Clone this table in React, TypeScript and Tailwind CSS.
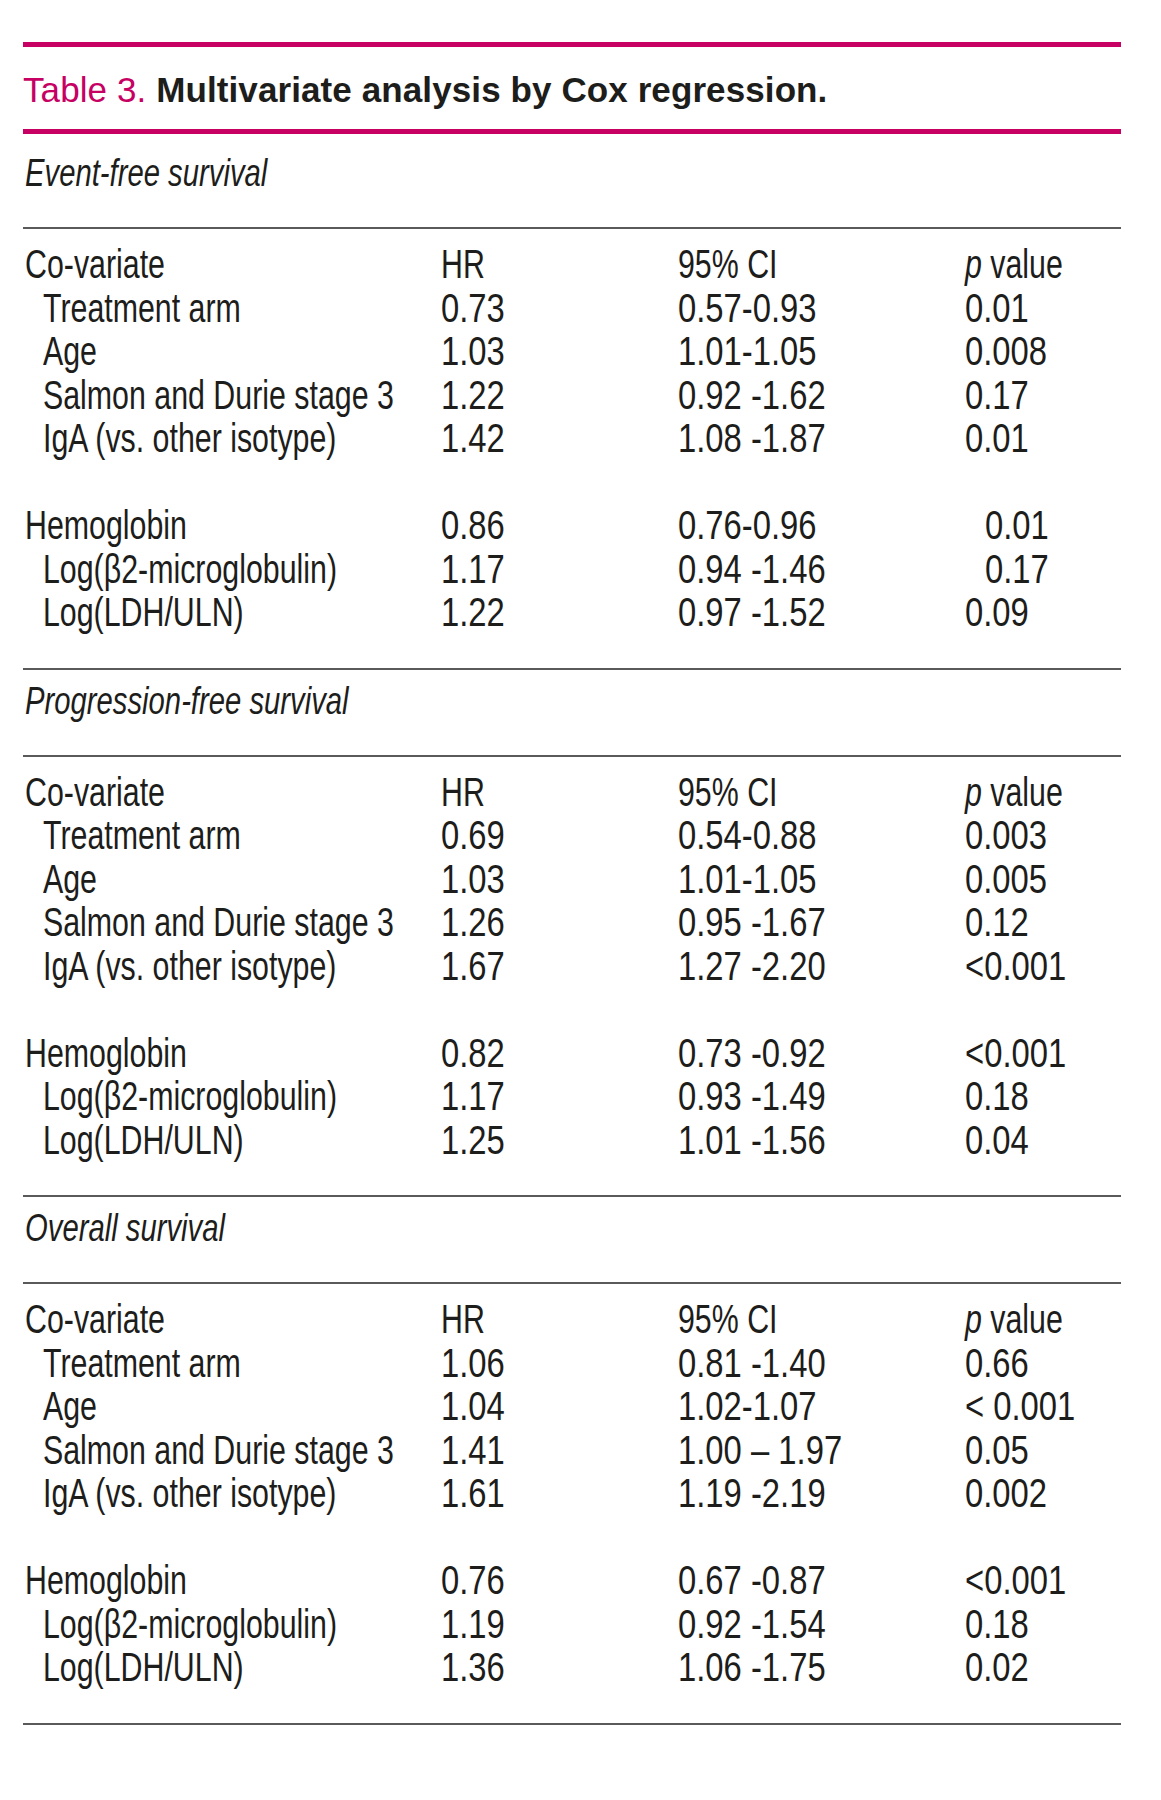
type Row = {
  label: string;
  hr: string;
  ci: string;
  p: string;
  indent?: boolean;
  pIndent?: boolean;
} | null;

type Section = { title: string; rows: Row[] };

const header: Row = { label: "Co-variate", hr: "HR", ci: "95% CI", p: "value" };

const sections: Section[] = [
  {
    title: "Event-free survival",
    rows: [
      header,
      { label: "Treatment arm", hr: "0.73", ci: "0.57-0.93", p: "0.01", indent: true },
      { label: "Age", hr: "1.03", ci: "1.01-1.05", p: "0.008", indent: true },
      { label: "Salmon and Durie stage 3", hr: "1.22", ci: "0.92 -1.62", p: "0.17", indent: true },
      { label: "IgA (vs. other isotype)", hr: "1.42", ci: "1.08 -1.87", p: "0.01", indent: true },
      null,
      { label: "Hemoglobin", hr: "0.86", ci: "0.76-0.96", p: "0.01", pIndent: true },
      { label: "Log(β2-microglobulin)", hr: "1.17", ci: "0.94 -1.46", p: "0.17", indent: true, pIndent: true },
      { label: "Log(LDH/ULN)", hr: "1.22", ci: "0.97 -1.52", p: "0.09", indent: true },
    ],
  },
  {
    title: "Progression-free survival",
    rows: [
      header,
      { label: "Treatment arm", hr: "0.69", ci: "0.54-0.88", p: "0.003", indent: true },
      { label: "Age", hr: "1.03", ci: "1.01-1.05", p: "0.005", indent: true },
      { label: "Salmon and Durie stage 3", hr: "1.26", ci: "0.95 -1.67", p: "0.12", indent: true },
      { label: "IgA (vs. other isotype)", hr: "1.67", ci: "1.27 -2.20", p: "<0.001", indent: true },
      null,
      { label: "Hemoglobin", hr: "0.82", ci: "0.73 -0.92", p: "<0.001" },
      { label: "Log(β2-microglobulin)", hr: "1.17", ci: "0.93 -1.49", p: "0.18", indent: true },
      { label: "Log(LDH/ULN)", hr: "1.25", ci: "1.01 -1.56", p: "0.04", indent: true },
    ],
  },
  {
    title: "Overall survival",
    rows: [
      header,
      { label: "Treatment arm", hr: "1.06", ci: "0.81 -1.40", p: "0.66", indent: true },
      { label: "Age", hr: "1.04", ci: "1.02-1.07", p: "< 0.001", indent: true },
      { label: "Salmon and Durie stage 3", hr: "1.41", ci: "1.00 – 1.97", p: "0.05", indent: true },
      { label: "IgA (vs. other isotype)", hr: "1.61", ci: "1.19 -2.19", p: "0.002", indent: true },
      null,
      { label: "Hemoglobin", hr: "0.76", ci: "0.67 -0.87", p: "<0.001" },
      { label: "Log(β2-microglobulin)", hr: "1.19", ci: "0.92 -1.54", p: "0.18", indent: true },
      { label: "Log(LDH/ULN)", hr: "1.36", ci: "1.06 -1.75", p: "0.02", indent: true },
    ],
  },
];

const Rule = () => <div className="h-[2px] bg-[#5a5a5a]" />;

// the print table uses a condensed face; squeeze Liberation Sans to match.
// letters run narrower than figures in that face, hence two widths
const Cond = ({ children, num }: { children: React.ReactNode; num?: boolean }) => (
  <span
    className={`inline-block origin-left whitespace-nowrap ${num ? "scale-x-[0.8]" : "scale-x-[0.74]"}`}
  >
    {children}
  </span>
);

function DataRow({ row, isHeader }: { row: Row; isHeader: boolean }) {
  if (!row) return <div className="h-[43.5px]" />;
  const num = !isHeader;
  return (
    <div className="grid h-[43.5px] grid-cols-[416px_237px_287px_1fr] items-center pl-[2px] leading-[43.5px]">
      <div className={row.indent ? "pl-[18px]" : ""}>
        <Cond>{row.label}</Cond>
      </div>
      <div>
        <Cond num={num}>{row.hr}</Cond>
      </div>
      <div>
        <Cond num={num}>{row.ci}</Cond>
      </div>
      <div className={row.pIndent ? "pl-[20px]" : ""}>
        <Cond num={num}>
          {isHeader && <i>p </i>}
          {row.p}
        </Cond>
      </div>
    </div>
  );
}

export default function App() {
  return (
    <div className="min-h-[1800px] bg-white pl-[23px] pt-[42px] text-[#1d1d1b]">
      <div className="w-[1098px]">
        <div className="h-[5px] bg-[#c70063]" />
        <div className="pb-[19px] pt-[23px] font-['Liberation_Sans',Arial,sans-serif] text-[35px] leading-[40px] tracking-[0.1px]">
          <span className="text-[#c70063]">Table 3.</span>{" "}
          <span className="font-bold">Multivariate analysis by Cox regression.</span>
        </div>
        <div className="h-[5px] bg-[#c70063]" />

        <div className="font-['Liberation_Sans',Arial,sans-serif] text-[41px]">
          {sections.map((s, i) => (
            <div key={s.title}>
              {i > 0 && <Rule />}
              <div className={`${i === 0 ? "pt-[17px]" : "pt-[9px]"} pb-[32px] pl-[2px] text-[38px] italic leading-[44px]`}>
                <span className="inline-block origin-left scale-x-[0.77] whitespace-nowrap">{s.title}</span>
              </div>
              <Rule />
              <div className="pb-[33px] pt-[14px]">
                {s.rows.map((r, j) => (
                  <DataRow key={j} row={r} isHeader={j === 0} />
                ))}
              </div>
            </div>
          ))}
          <Rule />
        </div>
      </div>
    </div>
  );
}
